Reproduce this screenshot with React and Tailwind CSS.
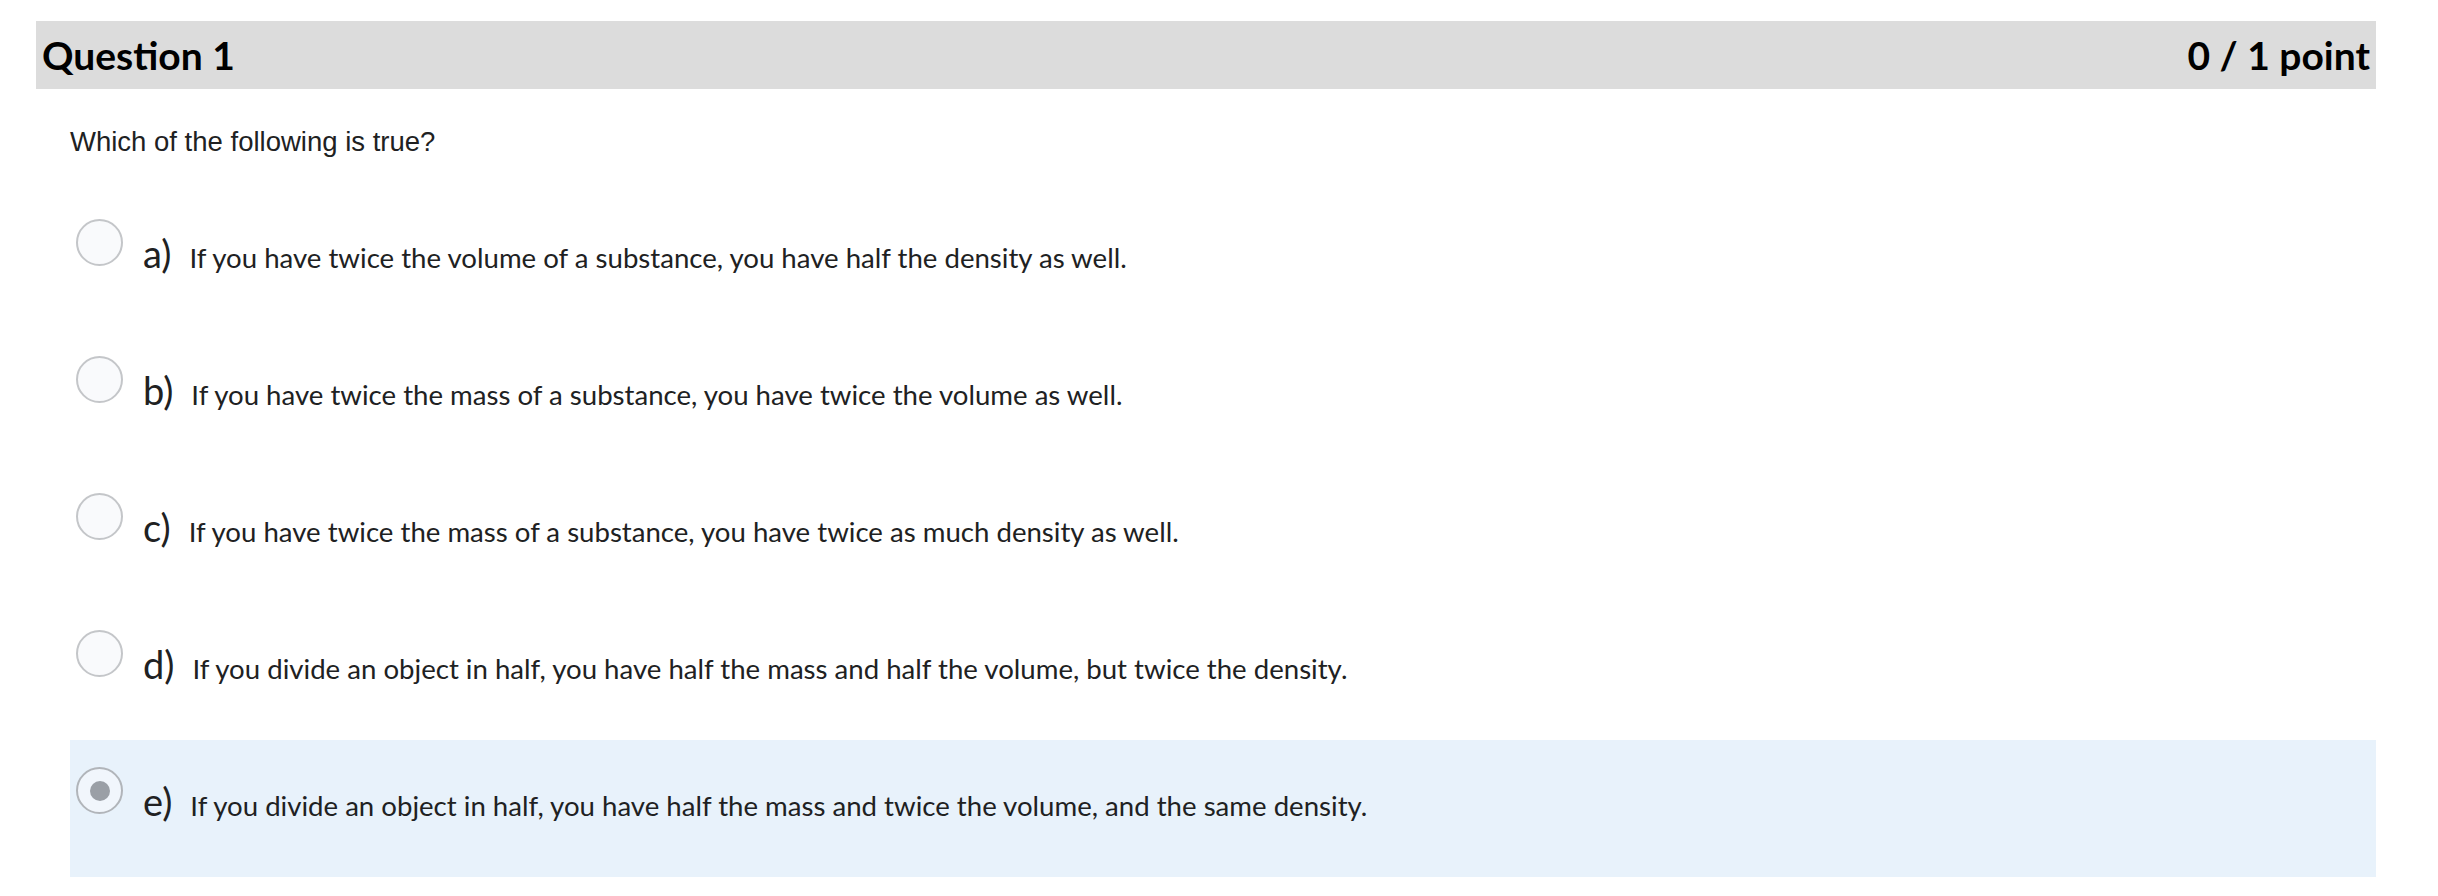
import React, { useState } from "react";

const options = [
  { key: "a", text: "If you have twice the volume of a substance, you have half the density as well." },
  { key: "b", text: "If you have twice the mass of a substance, you have twice the volume as well." },
  { key: "c", text: "If you have twice the mass of a substance, you have twice as much density as well." },
  { key: "d", text: "If you divide an object in half, you have half the mass and half the volume, but twice the density." },
  { key: "e", text: "If you divide an object in half, you have half the mass and twice the volume, and the same density." },
];

const Radio = ({ checked }) => (
  <span
    className={`flex shrink-0 items-center justify-center w-[47px] h-[47px] rounded-full border-2 ${
      checked ? "border-[#b1b5ba] bg-[#f1f6fc]" : "border-[#c4c6c9] bg-[#f9fafc]"
    }`}
  >
    {checked && <span className="block w-[20px] h-[20px] rounded-full bg-[#9a9fa6]"></span>}
  </span>
);

export default function App() {
  const [selected, setSelected] = useState("e");

  return (
    <div className="min-h-screen bg-white pt-[21px] pl-[36px] pr-[62px] font-['Lato','Noto_Sans',sans-serif] text-[#202122]">
      {/* Question header */}
      <div className="flex h-[68px] items-center justify-between bg-[#dcdcdc] pl-[6px] pr-[6px] text-black">
        <h2 className="text-[39px] font-bold leading-none">Question 1</h2>
        <span className="text-[39px] font-bold leading-none">0 / 1 point</span>
      </div>

      {/* Prompt */}
      <p className="mt-[37px] pl-[34px] font-['Liberation_Sans','Arial',sans-serif] text-[27.5px] leading-[32px] text-[#202122]">
        Which of the following is true?
      </p>

      {/* Options */}
      <div className="mt-[34px] pl-[34px]">
        {options.map((opt) => (
          <label
            key={opt.key}
            onClick={() => setSelected(opt.key)}
            className={`flex h-[137px] cursor-pointer items-start pl-[6px] pt-[27px] ${
              selected === opt.key ? "bg-[#e8f2fb]" : "bg-white"
            }`}
          >
            <Radio checked={selected === opt.key} />
            <div className="ml-[20px] mt-[15px] flex items-baseline">
              <span className="text-[38px] leading-none text-[#202122]">{opt.key})</span>
              <span className="ml-[18px] text-[27.6px] leading-none text-[#202122]">{opt.text}</span>
            </div>
          </label>
        ))}
      </div>
    </div>
  );
}
